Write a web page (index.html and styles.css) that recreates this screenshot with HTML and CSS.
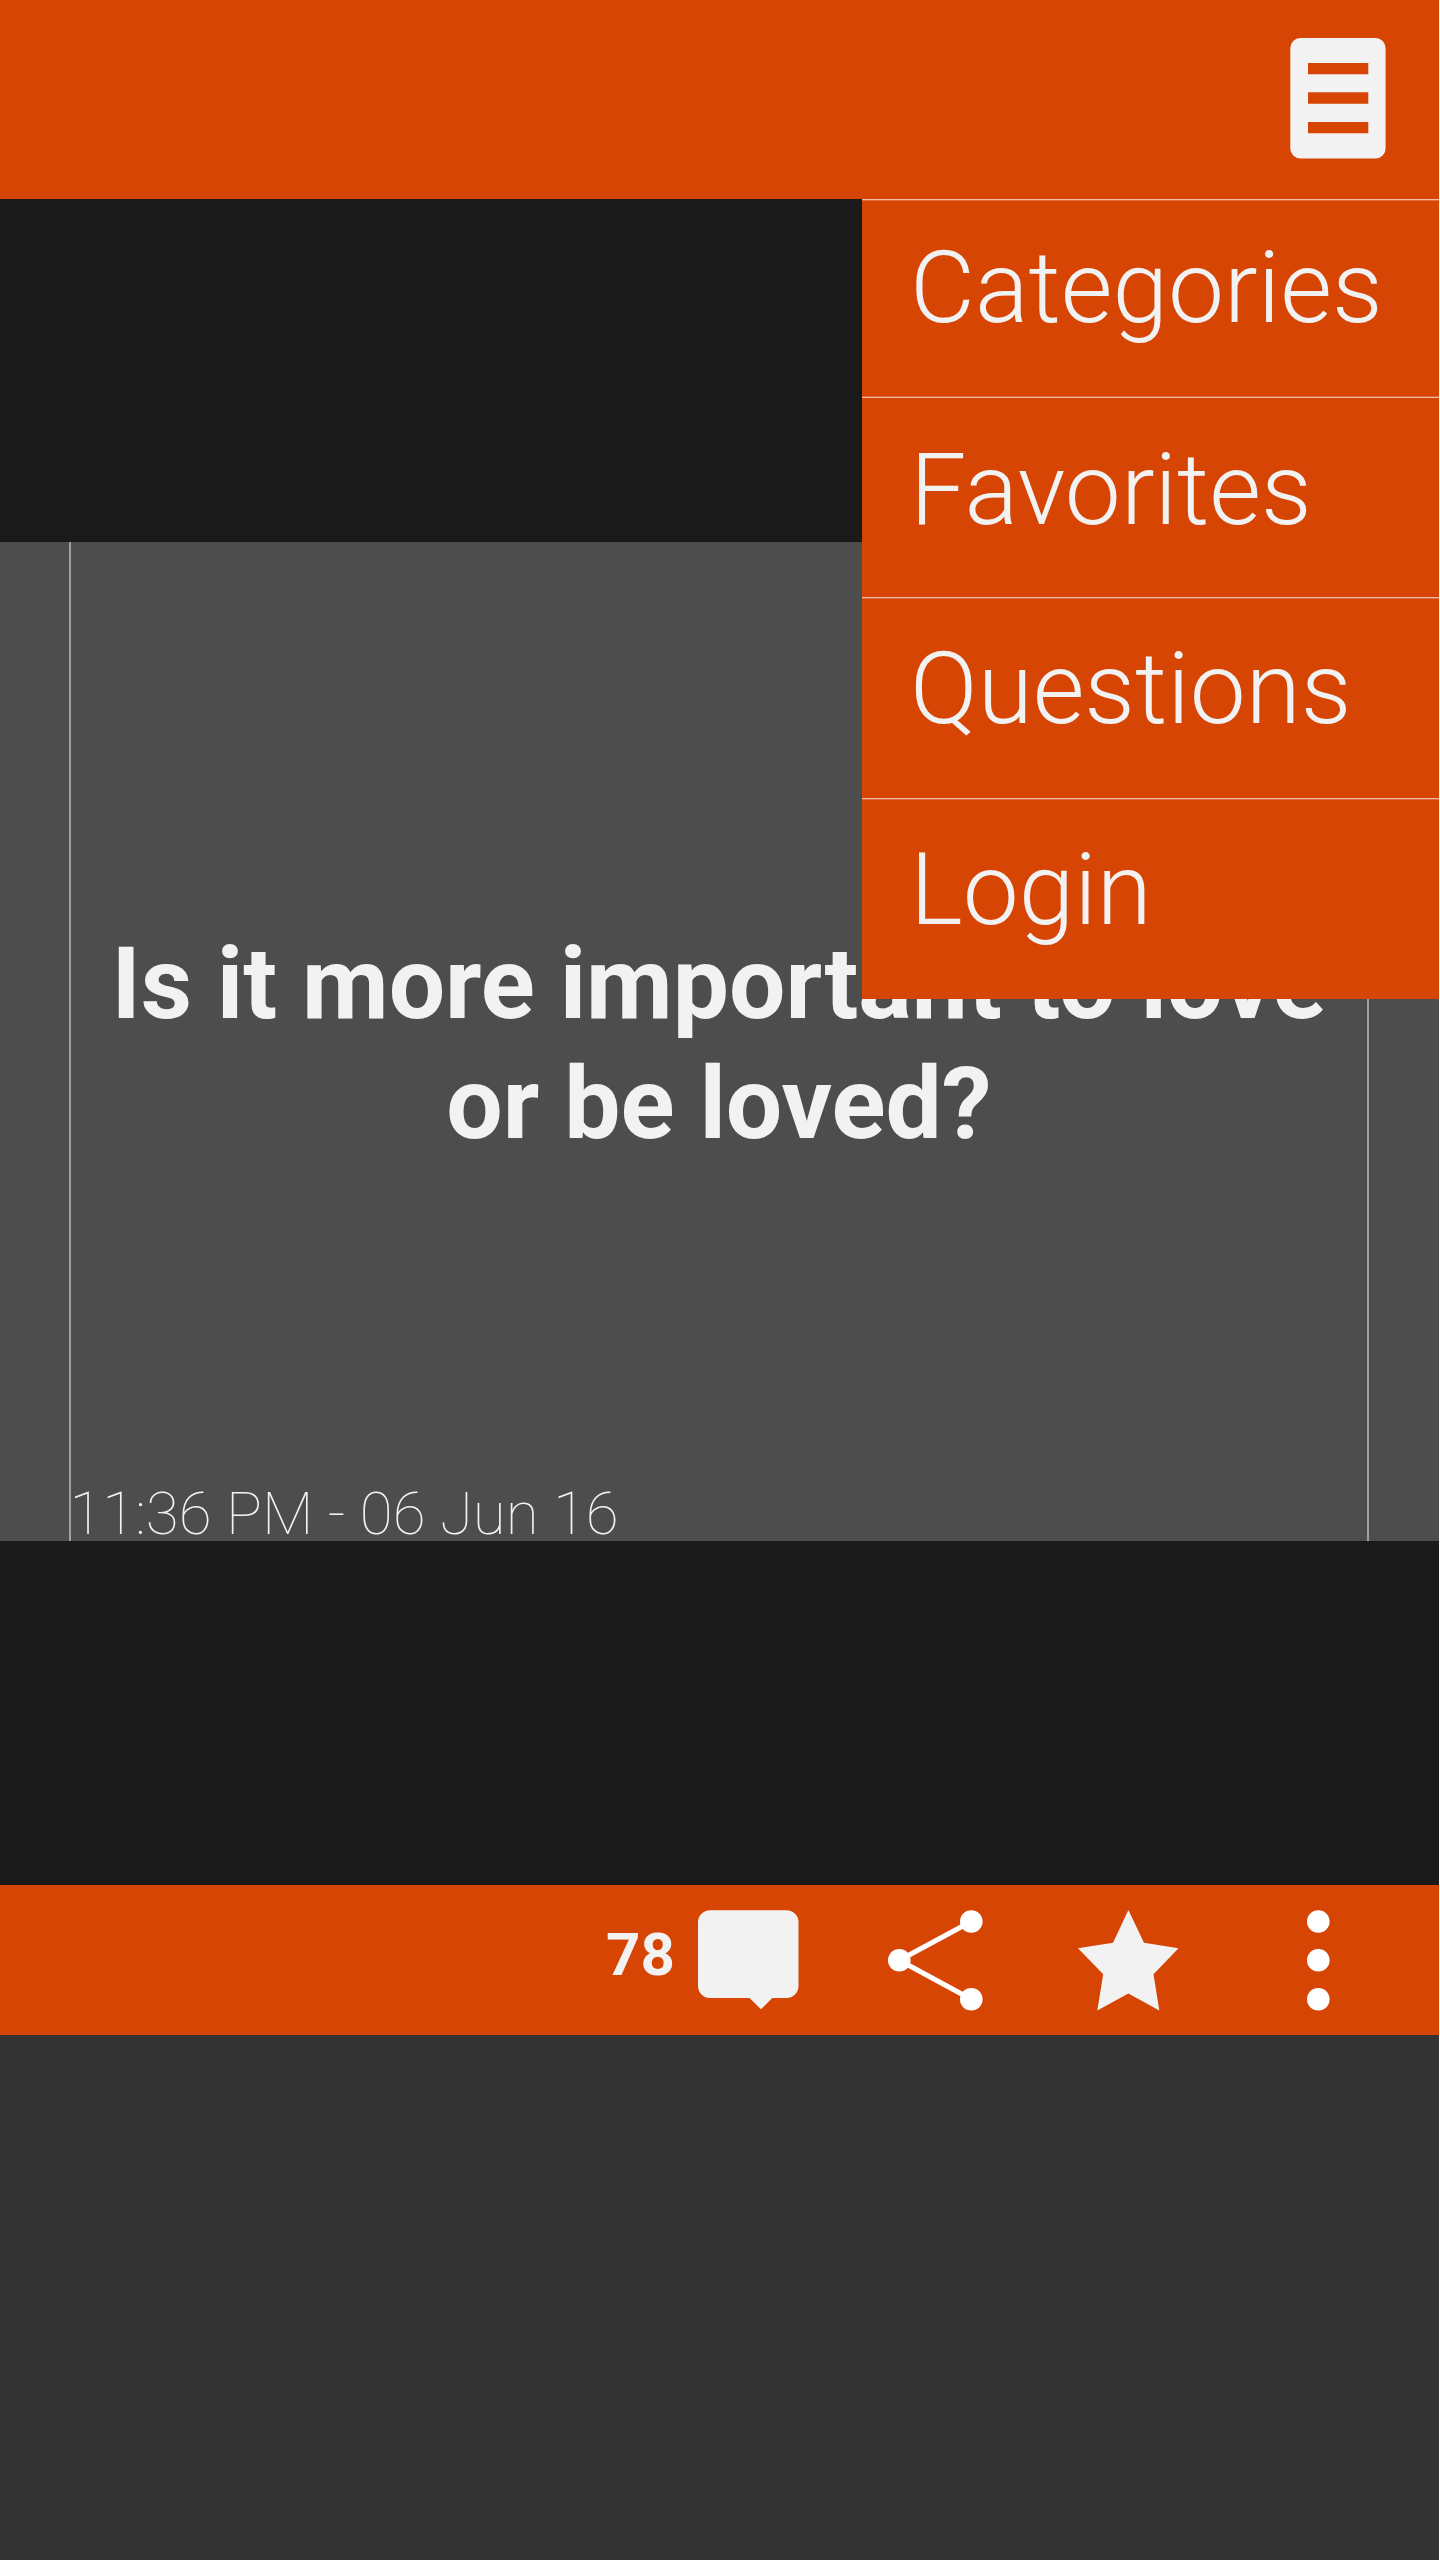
FILE: index.html
```html
<!DOCTYPE html>
<html lang="en">
<head>
<meta charset="utf-8">
<title>Question</title>
<link rel="stylesheet" href="styles.css">
</head>
<body>
<div class="screen">
  <header class="topbar">
    <svg class="menu-icon" width="96" height="121" viewBox="0 0 96 121">
      <rect x="0.3" y="0" width="95.3" height="120.4" rx="10" fill="#f2f2f2"/>
      <path d="M18 25h60.3v11.3H18zM18 54.3h60.3v11.4H18zM18 84h60.3v11.3H18z" fill="#d64504"/>
    </svg>
    <nav class="menu">
      <a class="menu-item">Categories</a>
      <a class="menu-item">Favorites</a>
      <a class="menu-item">Questions</a>
      <a class="menu-item">Login</a>
    </nav>
  </header>
  <main class="stage">
    <section class="card">
      <div class="card-body">
        <h1 class="question">Is it more important to love or be loved?</h1>
        <time class="date">11:36 PM - 06 Jun 16</time>
      </div>
    </section>
  </main>
  <footer class="actions">
    <span class="count">78</span>
    <svg class="icon" width="101" height="101" viewBox="0 0 101 101">
      <path d="M12 0.300H88.5a12 12 0 0 1 12 12V76a12 12 0 0 1-12 12H74.3L63 99.200 51.500 88H12A12 12 0 0 1 0 76V12.300A12 12 0 0 1 12 0.300z" fill="#f2f2f2"/>
    </svg>
    <svg class="icon share" width="95" height="101" viewBox="0 0 95 101">
      <path d="M83.300 11.500 11.300 50.300 83.300 89.300" fill="none" stroke="#fff" stroke-width="5"/>
      <g fill="#fff"><circle cx="83.300" cy="11.500" r="11.300"/><circle cx="11.300" cy="50.300" r="11.300"/><circle cx="83.300" cy="89.300" r="11.300"/></g>
    </svg>
    <svg class="icon star" width="101" height="101" viewBox="0 0 101 101">
      <path d="M50.400 0 66 32.800 100.500 38.300 75.500 64.300 81.300 100.500 50.400 83.500 19.300 100.500 25.200 64.300 0 38.300 35 32.800z" fill="#f2f2f2"/>
    </svg>
    <svg class="icon more" width="23" height="101" viewBox="0 0 23 101" fill="#fff">
      <circle cx="11.300" cy="11.500" r="11.300"/><circle cx="11.300" cy="50.300" r="11.300"/><circle cx="11.300" cy="89.300" r="11.300"/>
    </svg>
  </footer>
</div>
</body>
</html>
```
FILE: styles.css
```css
body {
  margin: 0;
  background: #fff;
  font-family: Roboto, sans-serif;
  color: #f2f2f2;
}

.screen {
  display: flex;
  flex-direction: column;
  width: 1439px;
  height: 2560px;
  background: #333;
}

.topbar {
  position: relative;
  display: flex;
  justify-content: flex-end;
  box-sizing: border-box;
  height: 199px;
  padding: 38px 53px 0 0;
  background: #d64504;
}

.menu-icon {
  display: block;
}

.menu {
  position: absolute;
  z-index: 1;
  top: 199px;
  right: 0;
  display: grid;
  grid-template-rows: 197px 201px 201px 201px;
  width: 577px;
  height: 800px;
  background: #d64504;
}

.menu-item {
  padding: 3px 0 0 48px;
  border-top: 1px solid #eebba4;
  box-shadow: inset 0 1px #dd6d3b;
  font-size: 100px;
  font-weight: 300;
  line-height: 175px;
}

.menu-item:first-child {
  padding-top: 0;
}

.menu-item:nth-child(2) {
  padding-top: 5px;
  border-color: #dd6d3b;
  box-shadow: inset 0 1px #eebba4;
}

.stage {
  box-sizing: border-box;
  height: 1686px;
  padding-top: 343px;
  background: #1a1a1a;
}

.card {
  height: 999px;
  padding: 0 70px 0 69px;
  background: #4d4d4d;
}

.card-body {
  display: flex;
  flex-direction: column;
  box-sizing: border-box;
  height: 100%;
  border: solid #a0a0a0;
  border-width: 0 2px;
}

.question {
  flex: 1;
  margin: 0;
  padding: 382px 40px 0;
  font-size: 100px;
  font-weight: 700;
  line-height: 120px;
  text-align: center;
}

.date {
  height: 60px;
  margin-left: -1.5px;
  font-size: 60px;
  font-weight: 100;
  line-height: 65px;
}

.actions {
  display: flex;
  align-items: flex-start;
  box-sizing: border-box;
  height: 150px;
  padding: 25px 109px 0 606px;
  background: #d64504;
}

.count {
  flex: 1;
  font-size: 60px;
  font-weight: 700;
  line-height: 90px;
}

.icon {
  display: block;
}

.share {
  margin-left: 89px;
}

.star {
  margin-left: 95px;
}

.more {
  margin-left: 128px;
}
```
